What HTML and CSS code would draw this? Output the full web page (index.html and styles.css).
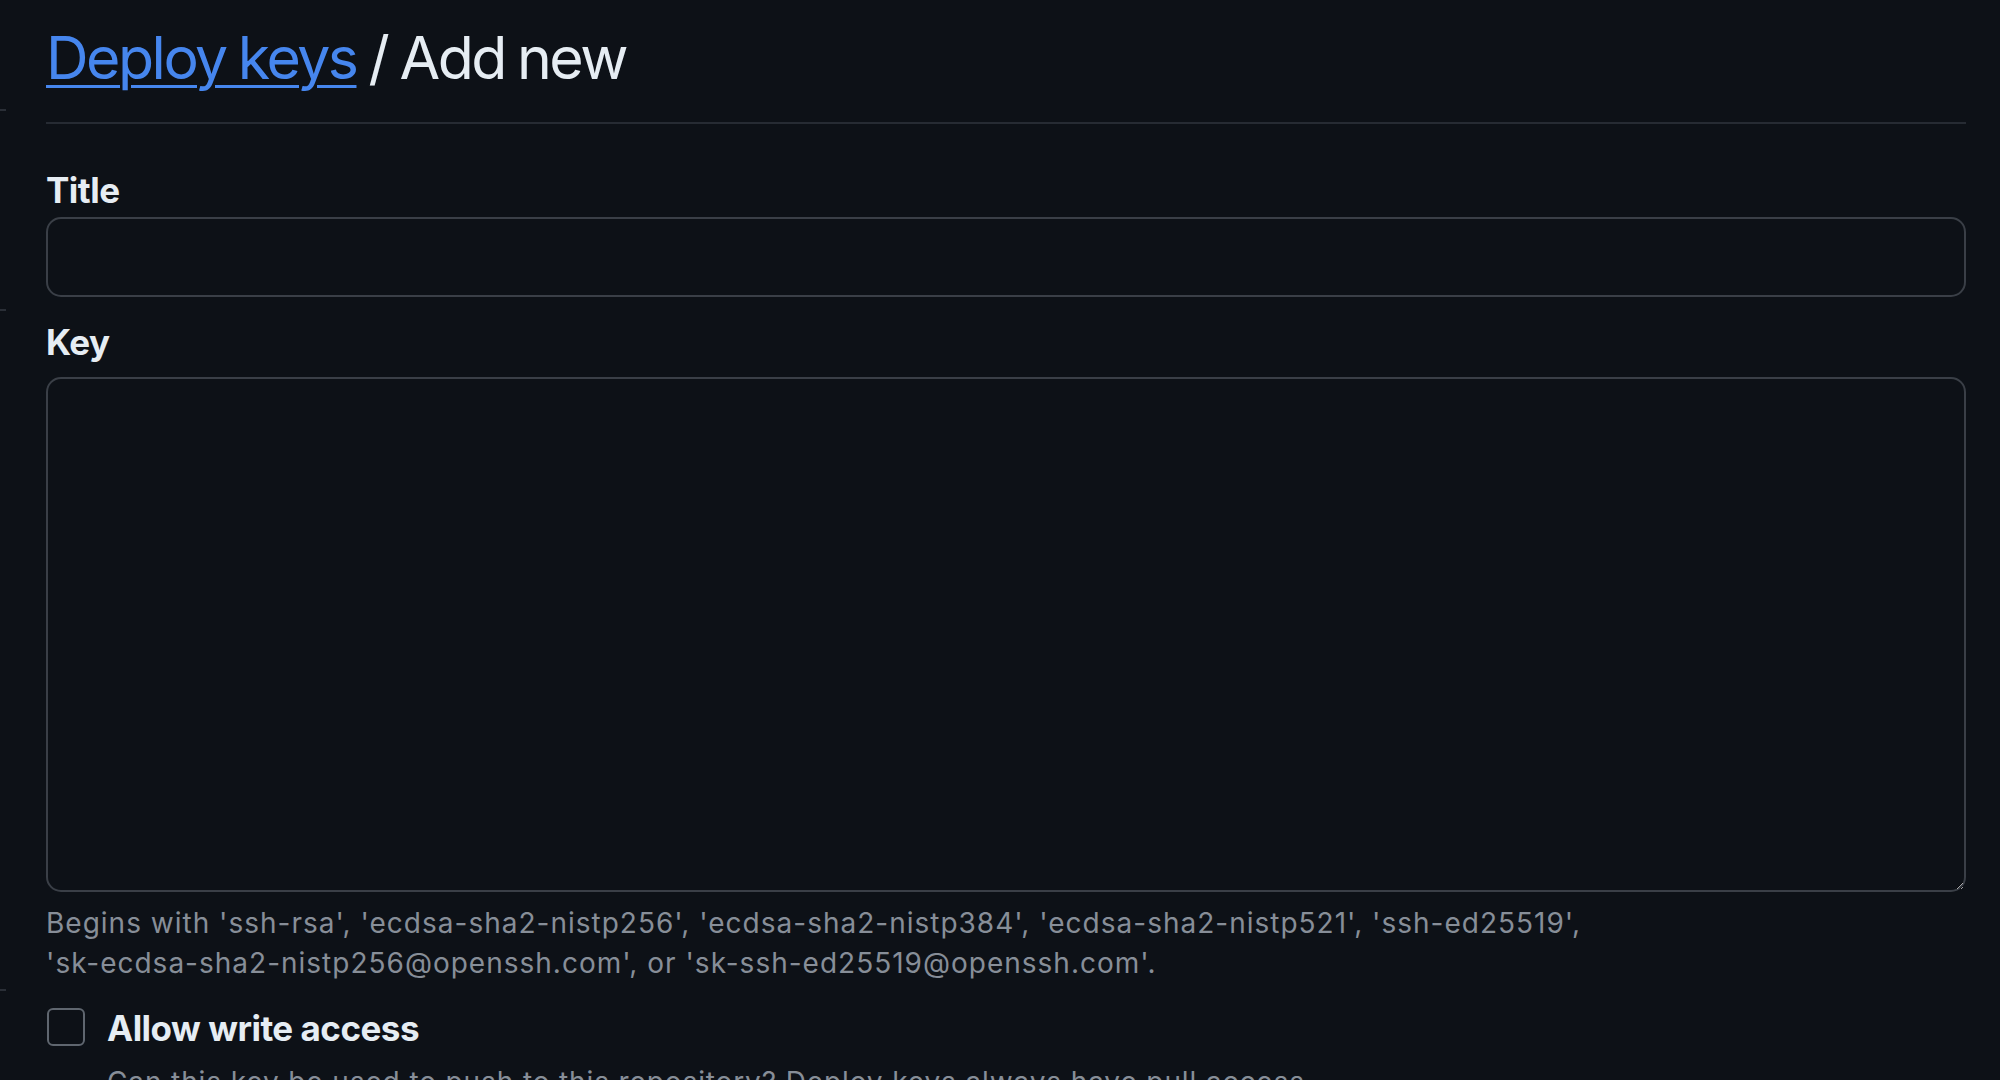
FILE: index.html
```html
<!DOCTYPE html>
<html lang="en">
<head>
<meta charset="utf-8">
<title>Deploy keys / Add new</title>
<link rel="stylesheet" href="styles.css">
</head>
<body>
<div class="page">
  <aside class="edge">
    <span class="tick tick-1"></span>
    <span class="tick tick-2"></span>
    <span class="tick tick-3"></span>
  </aside>
  <main class="main">
    <header class="subhead">
      <h2 class="subhead-heading"><a href="#" class="crumb">Deploy keys</a> / Add new</h2>
    </header>
    <form class="form">
      <div class="group group-title">
        <label class="label" for="title">Title</label>
        <input class="input" id="title" type="text">
      </div>
      <div class="group group-key">
        <label class="label" for="key">Key</label>
        <textarea class="textarea" id="key"></textarea>
        <p class="note">Begins with 'ssh-rsa', 'ecdsa-sha2-nistp256', 'ecdsa-sha2-nistp384', 'ecdsa-sha2-nistp521', 'ssh-ed25519',<br>'sk-ecdsa-sha2-nistp256@openssh.com', or 'sk-ssh-ed25519@openssh.com'.</p>
      </div>
      <div class="check">
        <span class="checkbox"></span>
        <div class="check-body">
          <div class="check-label">Allow write access</div>
          <p class="check-note">Can this key be used to push to this repository? Deploy keys always have pull access.</p>
        </div>
      </div>
    </form>
  </main>
</div>
</body>
</html>
```
FILE: styles.css
```css
html, body {
  margin: 0;
  padding: 0;
  background: #0d1117;
  color-scheme: dark;
}

body {
  font-family: Inter, "Noto Sans", "Liberation Sans", sans-serif;
  color: #e6edf3;
  height: 1080px;
  overflow: hidden;
}

.page {
  display: flex;
  height: 1080px;
}

.edge {
  width: 6px;
  flex: 0 0 6px;
  display: flex;
  flex-direction: column;
}

.tick {
  display: block;
  height: 2px;
  background: #2a2f37;
}
.tick-1 { margin-top: 109px; }
.tick-2 { margin-top: 198px; }
.tick-3 { margin-top: 678px; }

.main {
  flex: 1;
  padding: 20px 34px 0 40px;
}

.subhead {
  border-bottom: 2px solid #262b33;
  padding-bottom: 27px;
}

.subhead-heading {
  margin: 0;
  font-size: 59px;
  line-height: 75px;
  font-weight: 400;
  color: #e6edf3;
  letter-spacing: -2.5px;
  word-spacing: -2px;
}

.crumb {
  color: #4686ee;
  text-decoration: underline;
  text-decoration-thickness: 3px;
  text-underline-offset: 6px;
}

.form {
  margin: 0;
}

.label {
  display: block;
  font-size: 35px;
  line-height: 52px;
  font-weight: 700;
  color: #e6edf3;
  letter-spacing: -0.5px;
}

.group-title {
  padding-top: 40px;
}

.group-title .label {
  margin-bottom: 1px;
}

.input {
  display: block;
  box-sizing: border-box;
  width: 100%;
  height: 80px;
  margin: 0;
  background: #0d1117;
  border: 2px solid #3a3f47;
  border-radius: 15px;
  color: #e6edf3;
  font: inherit;
  font-size: 32px;
  padding: 0 20px;
  outline: none;
}

.group-key {
  padding-top: 19px;
}

.textarea {
  display: block;
  box-sizing: border-box;
  width: 100%;
  height: 515px;
  margin: 9px 0 0;
  background: #0d1117;
  border: 2px solid #3a3f47;
  border-radius: 15px;
  color: #e6edf3;
  font: inherit;
  font-size: 32px;
  padding: 20px;
  resize: vertical;
  outline: none;
}

.note {
  margin: 11px 0 0;
  font-size: 28px;
  line-height: 40px;
  color: #878e98;
  letter-spacing: 1px;
}

.check {
  display: flex;
  gap: 22px;
  margin-top: 19px;
}

.checkbox {
  flex: 0 0 auto;
  box-sizing: border-box;
  width: 38px;
  height: 38px;
  margin: 6px 0 0 1px;
  border: 2px solid #5f666f;
  border-radius: 6px;
}

.check-label {
  font-size: 35px;
  line-height: 52px;
  font-weight: 700;
  color: #e6edf3;
  letter-spacing: -0.5px;
}

.check-note {
  margin: 8px 0 0;
  font-size: 28px;
  line-height: 40px;
  color: #878e98;
  letter-spacing: 0.88px;
}
```
